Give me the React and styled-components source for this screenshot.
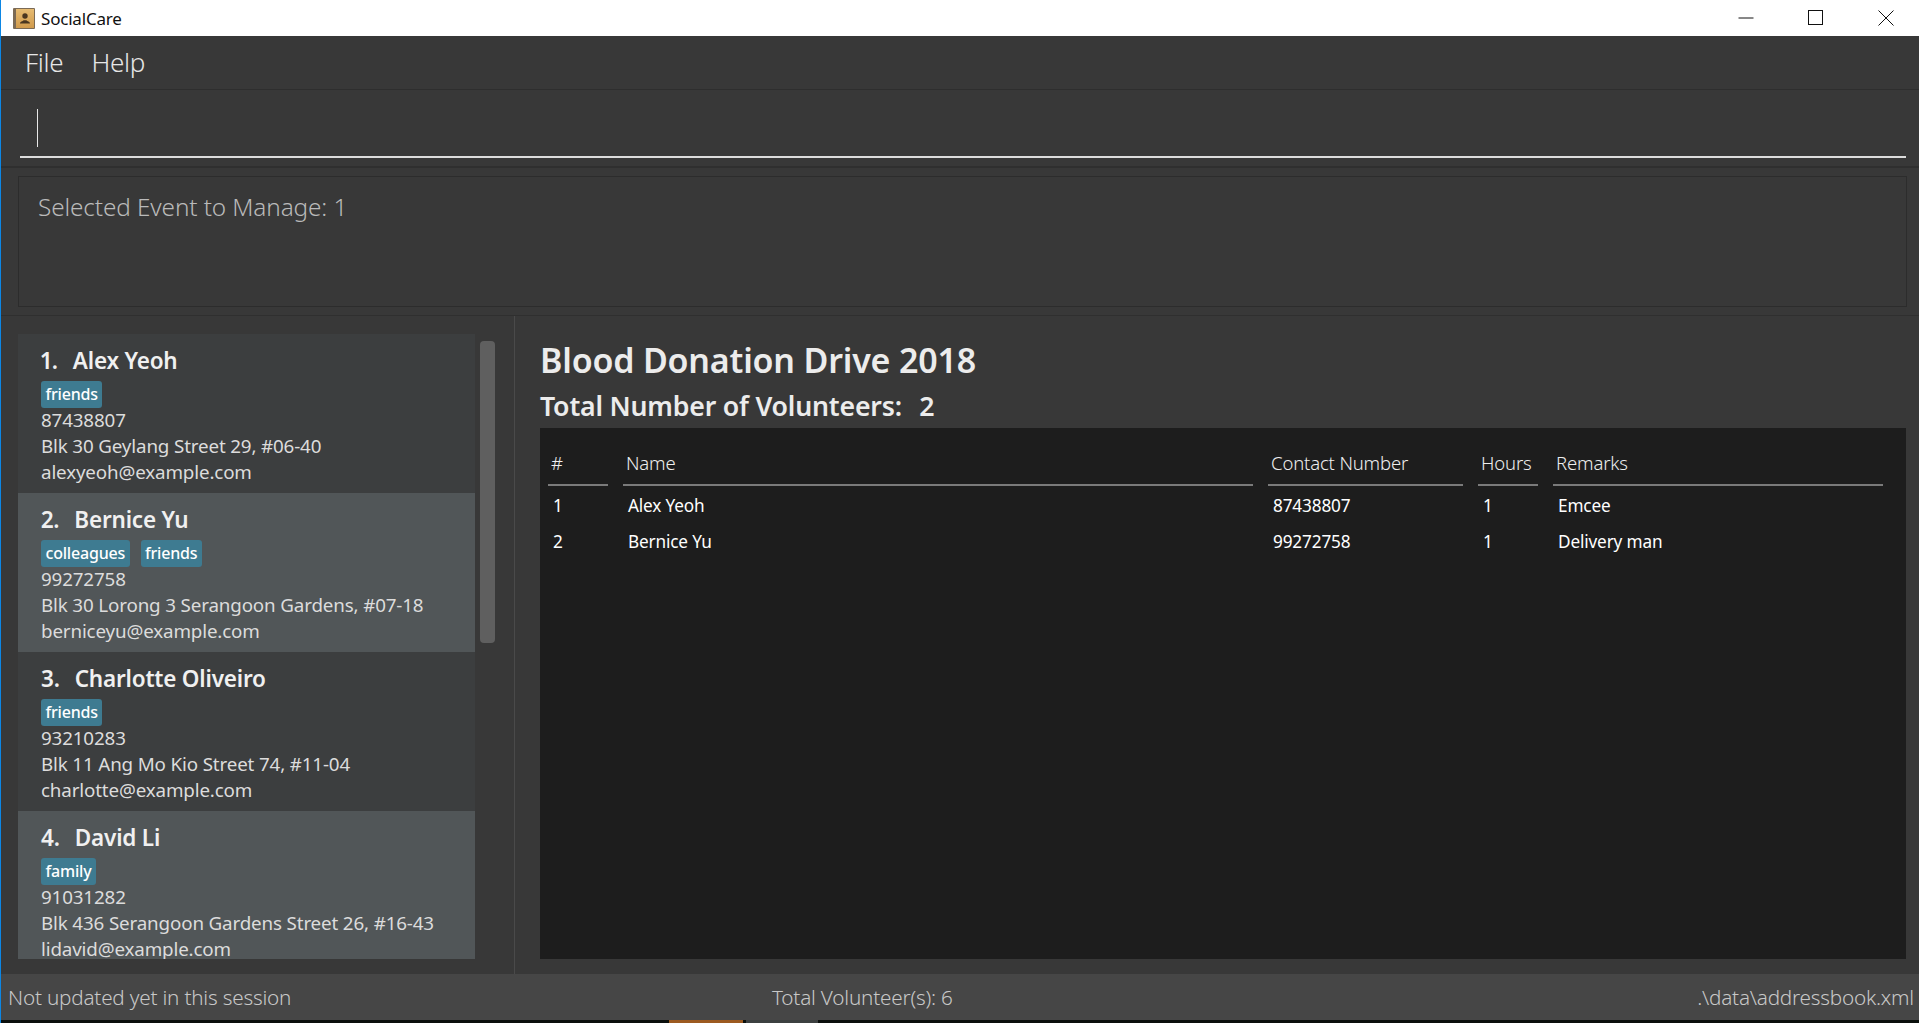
import React from "react";
import styled, { createGlobalStyle } from "styled-components";

const Global = createGlobalStyle`
  html, body { margin: 0; padding: 0; background: #383838; overflow: hidden; }
  #root { width: 1919px; height: 1023px; }
  * { box-sizing: border-box; }
`;
const UI = `"Noto Sans", "Open Sans", "Liberation Sans", sans-serif`;

const Frame = styled.div`
  width: 1919px; height: 1023px; display: flex; flex-direction: column;
  border-left: 1px solid #0c86e4; background: #383838; font-family: ${UI}; overflow: hidden;
`;
const TitleBar = styled.header`
  height: 36px; flex: none; background: #fff; display: flex; align-items: center; padding-left: 12px;
`;
const AppName = styled.span`
  margin-left: 6px; font-size: 17px; color: #111; letter-spacing: -0.2px; flex: 1;
`;
const WinButtons = styled.div`
  display: flex; align-items: center; height: 100%; padding-right: 25px; gap: 54px;
`;
const MenuBar = styled.nav`
  height: 54px; flex: none; display: flex; align-items: center; padding: 0 0 1px 24px; gap: 28px;
  border-bottom: 1px solid #2e2e2e;
`;
const MenuItem = styled.span`
  font-size: 26px; font-weight: 300; color: #e6e6e6; letter-spacing: -0.3px; line-height: 1;
`;
const CommandBox = styled.div`
  height: 78px; flex: none; padding: 0 13px 0 19px; border-bottom: 2px solid #2f2f2f;
`;
const CommandField = styled.div`
  height: 68px; border-bottom: 2px solid #dcdcdc; padding: 19px 0 0 17px;
`;
const Caret = styled.div`
  width: 1px; height: 38px; background: #e8e8e8;
`;
const ResultArea = styled.div`
  height: 148px; flex: none; padding: 8px 12px 8px 17px; border-bottom: 1px solid #2f2f2f;
`;
const ResultBox = styled.div`
  height: 100%; border: 1px solid #2c2c2c; padding: 14px 0 0 19px;
  font-size: 24.3px; font-weight: 300; color: #bababa; line-height: 32px; letter-spacing: -0.1px;
`;
const Main = styled.main`
  flex: 1; min-height: 0; display: flex;
`;
const LeftPane = styled.section`
  width: 514px; flex: none; border-right: 1px solid #4a4a4a; padding: 18px 0 15px 17px; display: flex; gap: 5px;
`;
const CardList = styled.div`
  width: 457px; height: 100%; overflow: hidden; flex: none;
`;
const Thumb = styled.div`
  width: 15px; height: 302px; margin-top: 7px; background: #5f5f5f; border-radius: 4px;
`;
const Card = styled.article`
  height: 159px; padding: 10px 0 0 23px; background: ${p => (p.$alt ? "#515658" : "#3c3e3f")};
`;
const CardName = styled.div`
  display: flex; gap: 15px; font-size: 22.5px; font-weight: 600; color: #f0f0f0; line-height: 34px; letter-spacing: -0.2px;
  font-variant-numeric: proportional-nums;
`;
const Tags = styled.div`
  display: flex; gap: 11px; margin: 3px 0 -1px; height: 27px;
`;
const Tag = styled.span`
  height: 27px; padding: 0 4.5px; background: #3e7b91; border-radius: 3px; color: #fff;
  font-size: 16px; font-weight: 500; line-height: 26px; letter-spacing: -0.2px;
`;
const CardLine = styled.div`
  font-size: 18.8px; color: #dcdcdc; line-height: 26px; height: 26px; white-space: nowrap; letter-spacing: -0.15px;
`;
const RightPane = styled.section`
  flex: 1; min-width: 0; padding: 18px 13px 15px 25px; display: flex; flex-direction: column;
`;
const EventTitle = styled.h1`
  margin: 0; font-size: 34px; font-weight: 600; color: #ececec; line-height: 52px; height: 50px; letter-spacing: -0.2px;
`;
const TotalLine = styled.h2`
  margin: 0; font-size: 26.7px; font-weight: 600; color: #ececec; line-height: 44px; height: 44px; letter-spacing: -0.2px;
  white-space: pre;
`;
const TotalValue = styled.span`
  margin-left: 4px;
`;
const TablePanel = styled.div`
  flex: 1; min-height: 0; background: #1d1d1d; padding: 14px 0 0 8px;
`;
const Row = styled.div`
  display: grid; grid-template-columns: 60px 630px 195px 60px 330px; column-gap: 15px;
  height: ${p => (p.$head ? "46px" : "36px")};
`;
const HeadCell = styled.div`
  border-bottom: 2px solid #7a7a7a; padding: 8px 0 0 3px; height: 44px;
  font-size: 18.5px; font-weight: 300; color: #eeeeee; line-height: 26px; letter-spacing: -0.15px;
`;
const BodyCell = styled.div`
  padding-left: 5px; font-size: 17.2px; color: #ffffff; line-height: 36px; letter-spacing: -0.15px;
`;
const Status = styled.footer`
  height: 46px; flex: none; background: #464646; display: grid; grid-template-columns: 764px auto 1fr;
  align-items: center; padding: 0 5px 0 7px; font-size: 20.7px; font-weight: 300; color: #c8c8c8; letter-spacing: -0.2px;
`;
const StatusCell = styled.span`
  text-align: ${p => p.$align || "left"}; white-space: nowrap;
`;
const Taskbar = styled.div`
  height: 3px; flex: none; background: #0a0f0c; padding-left: 668px; display: flex; gap: 3px;
`;
const TaskTab = styled.div`
  width: ${p => p.$w}px; background: ${p => p.$c};
`;

const AppIcon = () => (
  <svg width="22" height="21" viewBox="0 0 22 21">
    <defs>
      <linearGradient id="tan" x1="0" y1="0" x2="0" y2="1">
        <stop offset="0" stopColor="#e6bb72" />
        <stop offset="1" stopColor="#d09a4c" />
      </linearGradient>
    </defs>
    <rect x="0" y="0" width="22" height="21" rx="1" fill="#7b6a55" />
    <rect x="3" y="1" width="18" height="19" fill="url(#tan)" />
    <circle cx="12" cy="8" r="2.700" fill="#4a3620" />
    <path d="M7 15.500c0-2 2.700-2.300 3.700-3.300h2.600c1 1 3.700 1.300 3.700 3.300z" fill="#4a3620" />
  </svg>
);
const MinIcon = () => (
  <svg width="16" height="16" viewBox="0 0 16 16"><path d="M0.500 8h15" stroke="#111" fill="none" /></svg>
);
const MaxIcon = () => (
  <svg width="16" height="16" viewBox="0 0 16 16"><rect x="0.500" y="0.500" width="14" height="14" stroke="#111" fill="none" /></svg>
);
const CloseIcon = () => (
  <svg width="16" height="16" viewBox="0 0 16 16"><path d="M0.500 0.500l15 15M15.500 0.500l-15 15" stroke="#111" fill="none" /></svg>
);

const people = [
  { n: "1.", name: "Alex Yeoh", tags: ["friends"], phone: "87438807", addr: "Blk 30 Geylang Street 29, #06-40", mail: "alexyeoh@example.com" },
  { n: "2.", name: "Bernice Yu", tags: ["colleagues", "friends"], phone: "99272758", addr: "Blk 30 Lorong 3 Serangoon Gardens, #07-18", mail: "berniceyu@example.com" },
  { n: "3.", name: "Charlotte Oliveiro", tags: ["friends"], phone: "93210283", addr: "Blk 11 Ang Mo Kio Street 74, #11-04", mail: "charlotte@example.com" },
  { n: "4.", name: "David Li", tags: ["family"], phone: "91031282", addr: "Blk 436 Serangoon Gardens Street 26, #16-43", mail: "lidavid@example.com" },
];
const heads = ["#", "Name", "Contact Number", "Hours", "Remarks"];
const rows = [
  ["1", "Alex Yeoh", "87438807", "1", "Emcee"],
  ["2", "Bernice Yu", "99272758", "1", "Delivery man"],
];

export default function App() {
  return (
    <Frame>
      <Global />
      <TitleBar>
        <AppIcon />
        <AppName>SocialCare</AppName>
        <WinButtons>
          <MinIcon />
          <MaxIcon />
          <CloseIcon />
        </WinButtons>
      </TitleBar>
      <MenuBar>
        <MenuItem>File</MenuItem>
        <MenuItem>Help</MenuItem>
      </MenuBar>
      <CommandBox>
        <CommandField><Caret /></CommandField>
      </CommandBox>
      <ResultArea>
        <ResultBox>Selected Event to Manage: 1</ResultBox>
      </ResultArea>
      <Main>
        <LeftPane>
          <CardList>
            {people.map((p, i) => (
              <Card key={p.n} $alt={i % 2 === 1}>
                <CardName><span>{p.n}</span><span>{p.name}</span></CardName>
                <Tags>{p.tags.map(t => <Tag key={t}>{t}</Tag>)}</Tags>
                <CardLine>{p.phone}</CardLine>
                <CardLine>{p.addr}</CardLine>
                <CardLine>{p.mail}</CardLine>
              </Card>
            ))}
          </CardList>
          <Thumb />
        </LeftPane>
        <RightPane>
          <EventTitle>Blood Donation Drive 2018</EventTitle>
          <TotalLine>Total Number of Volunteers:  <TotalValue>2</TotalValue></TotalLine>
          <TablePanel>
            <Row $head>{heads.map(h => <HeadCell key={h}>{h}</HeadCell>)}</Row>
            {rows.map(r => (
              <Row key={r[0]}>{r.map((c, i) => <BodyCell key={i}>{c}</BodyCell>)}</Row>
            ))}
          </TablePanel>
        </RightPane>
      </Main>
      <Status>
        <StatusCell>Not updated yet in this session</StatusCell>
        <StatusCell>Total Volunteer(s): 6</StatusCell>
        <StatusCell $align="right">.\data\addressbook.xml</StatusCell>
      </Status>
      <Taskbar>
        <TaskTab $w={74} $c="#9c5a20" />
        <TaskTab $w={72} $c="#3c4040" />
      </Taskbar>
    </Frame>
  );
}
